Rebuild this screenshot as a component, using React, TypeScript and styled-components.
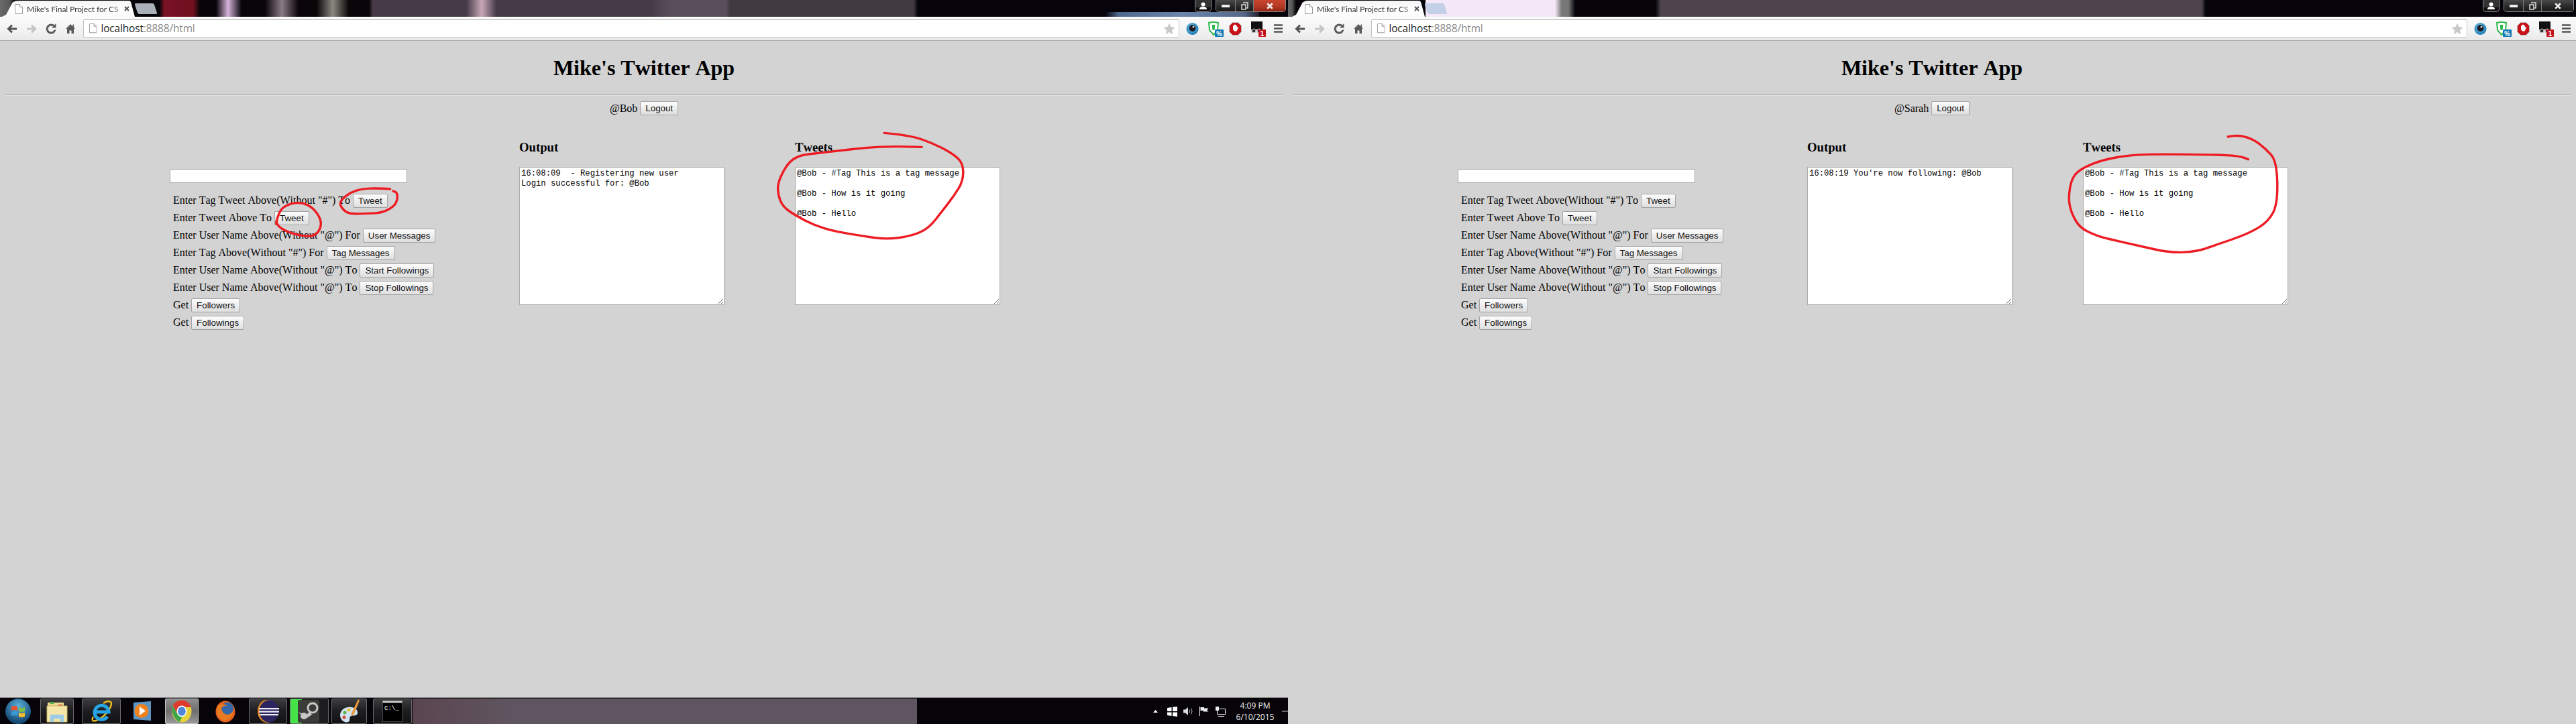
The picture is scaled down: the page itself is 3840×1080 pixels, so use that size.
import React from "react";
import styled, { createGlobalStyle } from "styled-components";

const Global = createGlobalStyle`
  html, body { margin: 0; padding: 0; background: #d3d3d3; }
  body { width: 3840px; height: 1080px; overflow: hidden; font-family: "Liberation Serif", "Times New Roman", serif; font-kerning: none; }
`;

const Desktop = styled.div`
  display: flex;
  width: 3840px;
  height: 1080px;
`;
const Win = styled.div`
  position: relative;
  flex: 0 0 1920px;
  height: 1080px;
  display: flex;
  flex-direction: column;
  background: #d3d3d3;
  overflow: hidden;
`;
const TabStrip = styled.div<{ $bg: string; $tabLeft: number }>`
  flex: 0 0 25px;
  display: flex;
  align-items: flex-start;
  padding-left: ${(p) => p.$tabLeft}px;
  background: ${(p) => p.$bg};
`;
const Tab = styled.div`
  flex: 0 0 197px;
  height: 24px;
  margin-top: 1px;
  display: flex;
  align-items: center;
  gap: 6px;
  padding: 0 8px 0 19px;
  box-sizing: border-box;
  background: linear-gradient(#f4f4f4, #ffffff 60%, #fafafa);
  clip-path: polygon(0 100%, 3% 88%, 8% 10%, 10% 2%, 12% 0, 96% 0, 97% 8%, 100% 100%);
`;
const TabTitle = styled.span`
  flex: 0 0 139px;
  white-space: nowrap;
  font: 12.2px Lato, "Open Sans", sans-serif;
  letter-spacing: -0.12px;
  color: #333;
  -webkit-mask-image: linear-gradient(to right, #000 90%, rgba(0, 0, 0, 0.45));
  mask-image: linear-gradient(to right, #000 90%, rgba(0, 0, 0, 0.45));
`;
const NewTab = styled.div<{ $c: string }>`
  flex: 0 0 29px;
  height: 16px;
  margin: 5px 0 0 2px;
  background: ${(p) => p.$c};
  border-radius: 2px;
  transform: skewX(18deg);
`;
const Controls = styled.div`
  margin-left: auto;
  display: flex;
  align-items: flex-start;
  gap: 6px;
  padding-right: 3px;
`;
const Profile = styled.div`
  width: 25px;
  height: 18px;
  box-sizing: border-box;
  border: 1px solid #8d8d8d;
  border-top: 0;
  border-radius: 0 0 5px 5px;
  background: linear-gradient(#333 0, #333 62%, #111 62%);
  display: flex;
  align-items: center;
  justify-content: center;
`;
const CtlGroup = styled.div`
  display: flex;
  height: 18px;
  box-sizing: border-box;
  border: 1px solid #8d8d8d;
  border-top: 0;
  border-radius: 0 0 5px 5px;
  overflow: hidden;
`;
const CtlBtn = styled.div<{ $w: number; $red?: boolean }>`
  width: ${(p) => p.$w}px;
  display: flex;
  align-items: center;
  justify-content: center;
  border-left: 1px solid #7d7d7d;
  &:first-child { border-left: 0; }
  background: ${(p) =>
    p.$red ? "linear-gradient(#c9452f, #b33a25 55%, #8f2412)" : "linear-gradient(#4a4a4a, #2a2a2a 55%, #1a1a1a)"};
`;
const Toolbar = styled.div`
  flex: 0 0 36px;
  box-sizing: border-box;
  display: flex;
  align-items: center;
  padding: 0 9px 0 10px;
  background: linear-gradient(#fbfbfb, #f2f2f2 60%, #e9e9e9);
  border-bottom: 1px solid #a8a8a8;
`;
const NavBtn = styled.span<{ $w: number; $ml: number }>`
  flex: 0 0 ${(p) => p.$w}px;
  margin-left: ${(p) => p.$ml}px;
  display: flex;
  justify-content: center;
`;
const Omnibox = styled.div`
  flex: 0 0 1634px;
  height: 27px;
  margin-left: 12px;
  box-sizing: border-box;
  display: flex;
  align-items: center;
  padding: 0 5px 0 8px;
  gap: 6px;
  background: #fff;
  border: 1px solid #c4c4c4;
  border-top-color: #b0b0b0;
  border-radius: 2px;
`;
const Url = styled.span`
  font: 15.4px "Open Sans", "Noto Sans", sans-serif;
  letter-spacing: -0.12px;
  color: #222;
  flex: 1;
  white-space: nowrap;
`;
const UrlRest = styled.span`
  color: #8a8a8a;
`;
const ExtSlot = styled.span<{ $ml: number }>`
  display: flex;
  margin-left: ${(p) => p.$ml}px;
`;

const Page = styled.main`
  flex: 1;
  min-height: 0;
  padding: 0 8px;
  color: #000;
`;
const Title = styled.h1`
  font-size: 32px;
  line-height: 37px;
  font-weight: bold;
  text-align: center;
  margin: 22px 0 21px;
`;
const Rule = styled.hr`
  margin: 0 0 8px;
  border: 0;
  border-top: 1px solid #a0a0a0;
  border-bottom: 1px solid #e4e4e4;
`;
const UserBar = styled.div`
  display: flex;
  justify-content: center;
  align-items: center;
  gap: 4px;
  height: 21px;
  font-size: 16px;
`;
const Columns = styled.div`
  display: flex;
  margin-top: 37px;
  padding-left: 245px;
`;
const FormCol = styled.div`
  flex: 0 0 521px;
  padding-top: 43px;
`;
const MsgCol = styled.section`
  flex: 0 0 411px;
`;
const Heading = styled.h3`
  margin: 0 0 18px;
  font-size: 18.72px;
  line-height: 22px;
  font-weight: bold;
`;
const TagInput = styled.input`
  display: block;
  width: 354px;
  height: 21px;
  box-sizing: border-box;
  margin: 0 0 13px;
  padding: 1px 2px;
  background: #fff;
  border: 1px solid #a9a9a9;
  border-radius: 0;
  outline: 0;
`;
const FormRow = styled.div`
  display: flex;
  align-items: center;
  gap: 4px;
  height: 26px;
  padding-left: 5px;
  font-size: 16px;
  white-space: nowrap;
`;
const Btn = styled.button`
  height: 21px;
  box-sizing: border-box;
  padding: 0 7px;
  font: 13.33px "Liberation Sans", Arial, sans-serif;
  color: #111;
  background: linear-gradient(#fdfdfd, #dedede);
  border: 1px solid #a4a4a4;
  border-radius: 2px;
`;
const Log = styled.textarea`
  display: block;
  width: 306px;
  height: 206px;
  box-sizing: border-box;
  margin: 0;
  padding: 2px;
  background: #fff;
  color: #000;
  border: 1px solid #a9a9a9;
  border-radius: 0;
  outline: 0;
  font: 12.22px/15px "Liberation Mono", "Courier New", monospace;
`;

const Taskbar = styled.footer`
  flex: 0 0 40px;
  box-sizing: border-box;
  display: flex;
  align-items: stretch;
  padding: 1px 0 0 0;
  border-top: 1px solid #8c8c8c;
  background: #060409;
  color: #fff;
`;
const Orb = styled.div`
  flex: 0 0 38px;
  height: 38px;
  margin-left: 8px;
  display: flex;
`;
const TaskBtn = styled.div<{ $w: number; $ml: number; $plain?: boolean; $on?: boolean }>`
  flex: 0 0 ${(p) => p.$w}px;
  margin-left: ${(p) => p.$ml}px;
  box-sizing: border-box;
  display: flex;
  align-items: center;
  justify-content: center;
  border-radius: 2px;
  ${(p) =>
    p.$plain
      ? ""
      : `border: 1px solid ${p.$on ? "#c8c8c8" : "#6b6b6b"};
         background: ${
           p.$on
             ? "linear-gradient(#8e8e8e, #6e6e6e 50%, #9a9a9a)"
             : "linear-gradient(#3d3d3f, #1d1d20 50%, #131316)"
         };`}
`;
const SteamBtn = styled(TaskBtn)`
  background: linear-gradient(to right, #47e24a 0, #47e24a 17px, #1d1d20 17px);
  justify-content: flex-end;
  padding-right: 13px;
`;
const Running = styled.div`
  flex: 0 0 752px;
  margin-left: 1px;
  background: linear-gradient(to right, #5a454f, #5f5560 20%, #5f5560);
`;
const Tray = styled.div`
  flex: 1;
  display: flex;
  align-items: center;
  padding-left: 352px;
`;
const TraySlot = styled.span<{ $ml: number }>`
  display: flex;
  margin-left: ${(p) => p.$ml}px;
`;
const Clock = styled.div`
  flex: 0 0 60px;
  margin-left: 14px;
  text-align: center;
  font: 12px/17px "Open Sans", "Noto Sans", sans-serif;
  color: #f0f0f0;
  white-space: nowrap;
`;
const ShowDesktop = styled.div`
  flex: 0 0 13px;
  margin-left: 10px;
  box-sizing: border-box;
  border: 1px solid #6a6a6a;
  background: linear-gradient(135deg, #4a4a4a, #111 45%);
`;

const Scribble = styled.svg<{ $l: number; $t: number }>`
  position: absolute;
  left: ${(p) => p.$l}px;
  top: ${(p) => p.$t}px;
  overflow: visible;
  pointer-events: none;
  z-index: 5;
`;

type Pt = [number, number];
const smooth = (pts: Pt[]) => {
  let d = `M${pts[0][0]} ${pts[0][1]}`;
  for (let i = 1; i < pts.length - 1; i++) {
    const mx = (pts[i][0] + pts[i + 1][0]) / 2;
    const my = (pts[i][1] + pts[i + 1][1]) / 2;
    d += ` Q${pts[i][0]} ${pts[i][1]} ${mx} ${my}`;
  }
  const e = pts[pts.length - 1];
  return d + ` L${e[0]} ${e[1]}`;
};

const Ink = ({ l, t, w, h, vw, vh, pts }: { l: number; t: number; w: number; h: number; vw: number; vh: number; pts: Pt[] }) => (
  <Scribble $l={l} $t={t} width={w} height={h} viewBox={`0 0 ${vw} ${vh}`} preserveAspectRatio="none">
    <path
      d={smooth(pts)}
      fill="none"
      stroke="#ed1c24"
      strokeWidth={3.4}
      strokeLinecap="round"
      strokeLinejoin="round"
      vectorEffect="non-scaling-stroke"
    />
  </Scribble>
);

const DocIcon = ({ s = 1 }: { s?: number }) => (
  <svg width={12 * s} height={15 * s} viewBox="0 0 12 15" style={{ flex: "none" }}>
    <path d="M.5.5h7l4 4v10H.5z" fill="#fff" stroke="#9a9a9a" />
    <path d="M7.5.5v4h4" fill="#eee" stroke="#9a9a9a" />
  </svg>
);
const CloseX = ({ c = "#555", s = 8 }: { c?: string; s?: number }) => (
  <svg width={s} height={s} viewBox="0 0 8 8" style={{ flex: "none" }}>
    <path d="M1 1l6 6M7 1L1 7" stroke={c} strokeWidth={2} />
  </svg>
);
const Back = ({ c }: { c: string }) => (
  <svg width="16" height="14" viewBox="0 0 16 14">
    <path d="M15 7H4M8 1.5 2.5 7 8 12.5" fill="none" stroke={c} strokeWidth={3} />
  </svg>
);
const Forward = ({ c }: { c: string }) => (
  <svg width="16" height="14" viewBox="0 0 16 14">
    <path d="M1 7h11M8 1.5 13.500 7 8 12.500" fill="none" stroke={c} strokeWidth={3} />
  </svg>
);
const Reload = () => (
  <svg width="16" height="16" viewBox="0 0 16 16">
    <path d="M13 4.500A6 6 0 1 0 14 9.500" fill="none" stroke="#5a5a5a" strokeWidth={3} />
    <path d="M9 6.500h6.500V0z" fill="#5a5a5a" />
  </svg>
);
const Home = () => (
  <svg width="14" height="15" viewBox="0 0 14 15">
    <path d="M7 1 0 8h2v7h3.500v-4.500h3V15H12V8h2l-2-2V1.500h-1.500v3z" fill="#5a5a5a" />
  </svg>
);
const Star = () => (
  <svg width="18" height="18" viewBox="0 0 18 18">
    <path d="M9 .5l2.600 5.700 6 .7-4.500 4.100 1.300 6.200L9 14.100l-5.400 3.100 1.300-6.200L.4 6.900l6-.7z" fill="#c8c8c8" />
  </svg>
);
const EyeExt = () => (
  <svg width="19" height="20" viewBox="0 0 19 20">
    <defs>
      <radialGradient id="eye" cx="45%" cy="40%" r="60%">
        <stop offset="0" stopColor="#7fd0ee" />
        <stop offset="1" stopColor="#1a78b0" />
      </radialGradient>
    </defs>
    <circle cx="9.500" cy="10" r="9" fill="url(#eye)" />
    <circle cx="9.500" cy="9" r="5" fill="#1c1c26" />
    <circle cx="11" cy="7" r="1.500" fill="#ddd" />
  </svg>
);
const ShieldExt = () => (
  <svg width="23" height="24" viewBox="0 0 23 24">
    <path d="M1 3 Q8 1 15 3 L14 14 L8 21 L2 14z" fill="#fff" stroke="#2fb84a" strokeWidth={2} />
    <path d="M5.500 6h5l-1 8h-3z" fill="#2fb84a" />
    <rect x="10" y="13" width="13" height="11" rx="1" fill="#0e77b5" />
    <text x="16.500" y="22.500" fontSize="10" fontWeight="bold" textAnchor="middle" fill="#fff" fontFamily="Liberation Sans, sans-serif">%</text>
  </svg>
);
const StopExt = () => (
  <svg width="19" height="20" viewBox="0 0 19 20">
    <path d="M5.500 .5h8l5 5v9l-5 5h-8l-5-5v-9z" fill="#c8131a" stroke="#bbb" />
    <path d="M6 9V5.500h1.500V4h1V3.500h1V4h1v1.500H12V8l1-1 1 1-2.500 5.500H8L6 11z" fill="#fff" />
  </svg>
);
const GhostExt = () => (
  <svg width="24" height="24" viewBox="0 0 24 24">
    <rect x="1" y="1" width="17" height="17" fill="#111" />
    <rect x="1" y="13" width="17" height="5" fill="#ddd" />
    <circle cx="5" cy="15" r="3" fill="#333" stroke="#ddd" />
    <circle cx="13" cy="15" r="3" fill="#333" stroke="#ddd" />
    <rect x="12" y="13" width="11" height="11" rx="1" fill="#c4121c" />
    <text x="17.500" y="22.500" fontSize="10.500" fontWeight="bold" textAnchor="middle" fill="#fff" fontFamily="Liberation Sans, sans-serif">1</text>
  </svg>
);
const Menu = () => (
  <svg width="13" height="13" viewBox="0 0 13 13">
    <path d="M0 1.500h13M0 6.500h13M0 11.500h13" stroke="#555" strokeWidth={2.400} />
  </svg>
);
const Person = () => (
  <svg width="11" height="12" viewBox="0 0 11 12">
    <circle cx="5.500" cy="3.500" r="3" fill="#fff" />
    <path d="M0 11c0-3 2-4 5.500-4S11 8 11 11z" fill="#fff" />
  </svg>
);

const OrbIcon = () => (
  <svg width="38" height="38" viewBox="0 0 38 38">
    <defs>
      <radialGradient id="orb" cx="50%" cy="30%" r="70%">
        <stop offset="0" stopColor="#5fb2dc" />
        <stop offset="1" stopColor="#0f3f6b" />
      </radialGradient>
    </defs>
    <circle cx="19" cy="19" r="18.500" fill="url(#orb)" stroke="#1c5f86" />
    <path d="M9 12q4-2 9 0v6q-5-2-9 0z" fill="#e8522f" />
    <path d="M20 13q4 2 9 0v6q-5 2-9 0z" fill="#7cc04a" />
    <path d="M9 20q4-2 9 0v6q-5-2-9 0z" fill="#3a9ad9" />
    <path d="M20 21q4 2 9 0v6q-5 2-9 0z" fill="#f2bc30" />
  </svg>
);
const FolderIcon = () => (
  <svg width="34" height="34" viewBox="0 0 34 34">
    <path d="M3 4h24v6H3z" fill="#e8d98c" />
    <path d="M7 3h5v3H7z" fill="#4cae4c" />
    <path d="M19 7h6v3h-6z" fill="#d9534f" />
    <path d="M2 9h30v24H2z" fill="#f3e6a8" stroke="#c9b56a" />
    <path d="M7 22h20v11h-5v-5H12v5H7z" fill="#9ccbe8" />
  </svg>
);
const IeIcon = () => (
  <svg width="32" height="36" viewBox="0 0 32 36">
    <path d="M4 26C0 34 6 34 14 29 22 24 30 15 31 7 31 2 26 2 19 6" fill="none" stroke="#e8b820" strokeWidth={2.500} />
    <path d="M7 19h20A10.500 10.500 0 1 0 25 26" fill="none" stroke="#25a5e8" strokeWidth={5} />
  </svg>
);
const WmpIcon = () => (
  <svg width="28" height="32" viewBox="0 0 28 32">
    <path d="M1 3 L27 1 V30 L1 28z" fill="#5d94c4" />
    <circle cx="13" cy="15.500" r="10.500" fill="#f0821e" />
    <path d="M10 9l9 6.500-9 6.500z" fill="#fff" />
  </svg>
);
const ChromeIcon = () => (
  <svg width="30" height="34" viewBox="0 0 30 34">
    <ellipse cx="15" cy="17" rx="14.500" ry="16.500" fill="#e8d23a" />
    <path d="M15 .5C9 .5 4 4 1.800 9L8 20l7-9h14C26.500 4.500 21 .5 15 .5z" fill="#dc3a2e" />
    <path d="M1.800 9C-.5 16 1 27 11.500 33l6-11L8 20z" fill="#3da64a" />
    <ellipse cx="15" cy="17" rx="7.500" ry="8.500" fill="#fff" />
    <ellipse cx="15" cy="17" rx="5.800" ry="6.800" fill="#4e86d8" />
  </svg>
);
const FoxIcon = () => (
  <svg width="30" height="34" viewBox="0 0 30 34">
    <ellipse cx="15" cy="17.500" rx="14.500" ry="16" fill="#e2611d" />
    <ellipse cx="18" cy="13" rx="9" ry="9.500" fill="#3566a8" />
    <path d="M4 8q8-4 14 1-7-1-9 4 1 7 8 9 6 0 10-6-1 12-12 15Q3 29 2 17q0-5 2-9z" fill="#ea7a1f" />
  </svg>
);
const EclipseIcon = () => (
  <svg width="32" height="34" viewBox="0 0 32 34">
    <ellipse cx="14" cy="17" rx="14" ry="17" fill="#e8891f" />
    <ellipse cx="17" cy="17" rx="14.500" ry="16.500" fill="#2b2560" />
    <path d="M2 12h30v2.200H2zM2 16.500h30v2.200H2zM3 21h28v2.200H3z" fill="#f0eef8" />
  </svg>
);
const SteamIcon = () => (
  <svg width="32" height="34" viewBox="0 0 32 34">
    <rect width="32" height="34" rx="3" fill="#3b3b38" />
    <circle cx="22" cy="12" r="7" fill="none" stroke="#c8c8c4" strokeWidth={3} />
    <circle cx="9" cy="24" r="5" fill="#c8c8c4" />
    <path d="M0 18l12 5 6-6 3 5-9 6z" fill="#c8c8c4" />
  </svg>
);
const PaintIcon = () => (
  <svg width="32" height="36" viewBox="0 0 32 36">
    <path d="M2 24c0-9 9-13 17-12 8 1 11 7 8 11-3 3-8 0-10 3-2 4 1 6-3 8-5 2-12-3-12-10z" fill="#cfe3f0" />
    <circle cx="9" cy="20" r="2.500" fill="#5fb04a" />
    <circle cx="15" cy="16" r="2.500" fill="#e8c32e" />
    <circle cx="8" cy="27" r="2.500" fill="#d9453a" />
    <path d="M29 0l2 2-9 22-4-1z" fill="#e89a3c" />
  </svg>
);
const CmdIcon = () => (
  <svg width="30" height="32" viewBox="0 0 30 32">
    <rect width="30" height="32" fill="#000" stroke="#8c8c8c" />
    <rect x="0.500" y="0.500" width="29" height="3" fill="#c8c8c8" />
    <text x="3" y="14" fontSize="9" fill="#fff" fontFamily="Liberation Mono, monospace">C:\_</text>
  </svg>
);

const TrayWin = () => (
  <svg width="15" height="15" viewBox="0 0 15 15">
    <path d="M0 2l6.500-1v6H0zM8 .8 15 0v7H8zM0 8.500h6.500v5.500L0 13zM8 8.500h7V15l-7-1z" fill="#fff" />
  </svg>
);
const TrayVol = () => (
  <svg width="15" height="14" viewBox="0 0 15 14">
    <path d="M0 4.500h3L7 1v12L3 9.500H0z" fill="#ddd" />
    <path d="M9 4.500q1.500 2.500 0 5M11.500 2.500q3 4.500 0 9" fill="none" stroke="#bbb" />
  </svg>
);
const TrayFlag = () => (
  <svg width="14" height="14" viewBox="0 0 14 14">
    <path d="M.5 0v14" stroke="#fff" />
    <path d="M1.500 1H7v1.500h6.500L11 5.500l2.500 2H6V6H1.500z" fill="#eee" />
  </svg>
);
const TrayNet = () => (
  <svg width="15" height="15" viewBox="0 0 15 15">
    <path d="M2.500 3.500h12v8h-12z" fill="none" stroke="#eee" />
    <path d="M4 14.500h9" stroke="#eee" />
    <rect x="0" y="0" width="5" height="6" fill="#eee" />
  </svg>
);
const Caret = () => (
  <svg width="7" height="4" viewBox="0 0 7 4">
    <path d="M0 4l3.500-4L7 4z" fill="#fff" />
  </svg>
);

const Chrome = ({ strip, tabLeft, newTab, red }: { strip: string; tabLeft: number; newTab: string; red?: boolean }) => (
  <>
    <TabStrip $bg={strip} $tabLeft={tabLeft}>
      <Tab>
        <DocIcon />
        <TabTitle>Mike's Final Project for CS</TabTitle>
        <CloseX />
      </Tab>
      <NewTab $c={newTab} />
      <Controls>
        <Profile>
          <Person />
        </Profile>
        <CtlGroup>
          <CtlBtn $w={28}>
            <svg width="12" height="4" viewBox="0 0 12 4"><rect width="12" height="4" fill="#eee" /></svg>
          </CtlBtn>
          <CtlBtn $w={26}>
            <svg width="11" height="12" viewBox="0 0 11 12"><path d="M3 1h7v8H8M1 4h6v7H1z" fill="none" stroke="#ddd" strokeWidth={1.500} /></svg>
          </CtlBtn>
          <CtlBtn $w={47} $red={red}>
            <CloseX c="#f4f4f4" s={10} />
          </CtlBtn>
        </CtlGroup>
      </Controls>
    </TabStrip>
    <Toolbar>
      <NavBtn $w={16} $ml={0}><Back c="#555" /></NavBtn>
      <NavBtn $w={16} $ml={13}><Forward c="#c4c4c4" /></NavBtn>
      <NavBtn $w={16} $ml={13}><Reload /></NavBtn>
      <NavBtn $w={14} $ml={14}><Home /></NavBtn>
      <Omnibox>
        <DocIcon s={0.95} />
        <Url>
          localhost<UrlRest>:8888/html</UrlRest>
        </Url>
        <Star />
      </Omnibox>
      <ExtSlot $ml={10}><EyeExt /></ExtSlot>
      <ExtSlot $ml={14}><ShieldExt /></ExtSlot>
      <ExtSlot $ml={8}><StopExt /></ExtSlot>
      <ExtSlot $ml={13}><GhostExt /></ExtSlot>
      <ExtSlot $ml={11}><Menu /></ExtSlot>
    </Toolbar>
  </>
);

const AppPage = ({ user, output, tweets }: { user: string; output: string; tweets: string }) => (
  <Page>
    <Title>Mike's Twitter App</Title>
    <Rule />
    <UserBar>
      {user} <Btn>Logout</Btn>
    </UserBar>
    <Columns>
      <FormCol>
        <TagInput type="text" />
        <FormRow>Enter Tag Tweet Above(Without "#") To <Btn>Tweet</Btn></FormRow>
        <FormRow>Enter Tweet Above To <Btn>Tweet</Btn></FormRow>
        <FormRow>Enter User Name Above(Without "@") For <Btn>User Messages</Btn></FormRow>
        <FormRow>Enter Tag Above(Without "#") For <Btn>Tag Messages</Btn></FormRow>
        <FormRow>Enter User Name Above(Without "@") To <Btn>Start Followings</Btn></FormRow>
        <FormRow>Enter User Name Above(Without "@") To <Btn>Stop Followings</Btn></FormRow>
        <FormRow>Get <Btn>Followers</Btn></FormRow>
        <FormRow>Get <Btn>Followings</Btn></FormRow>
      </FormCol>
      <MsgCol>
        <Heading>Output</Heading>
        <Log readOnly value={output} />
      </MsgCol>
      <MsgCol>
        <Heading>Tweets</Heading>
        <Log readOnly value={tweets} />
      </MsgCol>
    </Columns>
  </Page>
);

const TWEETS = "@Bob - #Tag This is a tag message\n\n@Bob - How is it going\n\n@Bob - Hello";

const LEFT_STRIP = `linear-gradient(to right, #0a0a14, #4f678c 8%, #6a86ac 50%, #55688a 90%, #20202a) 1649px 18px / 228px 7px no-repeat,
  linear-gradient(to right, #6a6a6a 0, #5a5a5a 14px, #08050a 22px, #08050a 238px, #7a1226 245px, #70101f 288px, #08050a 298px,
  #08050a 322px, #d8b4dc 340px, #08050a 360px, #0a0508 395px, #8a7a88 420px, #0a0508 445px, #0a0508 472px, #8a8a80 496px,
  #0a0508 520px, #0a0508 550px, #463a48 556px, #463a48 695px, #c8a8b8 718px, #463a48 740px, #463a48 970px, #5a4e5c 1000px,
  #5a4e5c 1082px, #413a40 1088px, #413a40 1362px, #06040a 1368px, #06040a 100%)`;
const RIGHT_STRIP = `linear-gradient(to right, #6a6a6a 0, #5a5a5a 6px, #08050a 12px, #08050a 204px, #f4e8f8 206px, #f4e8f8 398px,
  #777 408px, #777 418px, #08050a 428px, #08050a 548px, #4e444e 556px, #4e444e 1362px, #06040a 1368px, #06040a 100%)`;

export default function App() {
  return (
    <>
      <Global />
      <Desktop>
        <Win>
          <Chrome strip={LEFT_STRIP} tabLeft={3} newTab="#a9b0b8" red />
          <AppPage user="@Bob" output={"16:08:09  - Registering new user\nLogin successful for: @Bob"} tweets={TWEETS} />
          <Taskbar>
            <Orb><OrbIcon /></Orb>
            <TaskBtn $w={50} $ml={14}><FolderIcon /></TaskBtn>
            <TaskBtn $w={58} $ml={12}><IeIcon /></TaskBtn>
            <TaskBtn $w={48} $ml={8} $plain><WmpIcon /></TaskBtn>
            <TaskBtn $w={50} $ml={10} $on><ChromeIcon /></TaskBtn>
            <TaskBtn $w={60} $ml={10} $plain><FoxIcon /></TaskBtn>
            <TaskBtn $w={57} $ml={5}><EclipseIcon /></TaskBtn>
            <SteamBtn $w={58} $ml={4}><SteamIcon /></SteamBtn>
            <TaskBtn $w={53} $ml={4}><PaintIcon /></TaskBtn>
            <TaskBtn $w={58} $ml={9} $on={false}><CmdIcon /></TaskBtn>
            <Running />
            <Tray>
              <TraySlot $ml={0}><Caret /></TraySlot>
              <TraySlot $ml={14}><TrayWin /></TraySlot>
              <TraySlot $ml={9}><TrayVol /></TraySlot>
              <TraySlot $ml={9}><TrayFlag /></TraySlot>
              <TraySlot $ml={10}><TrayNet /></TraySlot>
              <Clock>4:09 PM<br />6/10/2015</Clock>
              <ShowDesktop />
            </Tray>
          </Taskbar>
          <Ink l={230} t={230} w={450} h={270} vw={1350} vh={810}
            pts={[[1055,156],[1000,152],[930,155],[880,170],[840,200],[828,225],[850,255],[880,268],[960,265],[1020,262],[1070,235],[1088,205],[1086,172],[1068,165]]} />
          <Ink l={230} t={230} w={450} h={270} vw={1350} vh={810}
            pts={[[545,312],[555,255],[600,222],[660,215],[710,240],[745,290],[745,330],[720,365],[670,368],[600,350],[555,325],[545,300]]} />
          <Ink l={750} t={190} w={760} h={280} vw={1568} vh={840}
            pts={[[1172,25],[1250,35],[1320,70],[1380,115],[1415,160],[1415,240],[1385,310],[1350,375],[1310,450],[1260,485],[1180,502],[1100,485],[1020,465],[960,440],[900,395],[860,355],[845,300],[845,245],[875,160],[910,125],[970,115],[1030,105],[1120,90],[1200,85],[1288,88]]} />
        </Win>
        <Win>
          <Chrome strip={RIGHT_STRIP} tabLeft={6} newTab="#c4d0e8" />
          <AppPage user="@Sarah" output={"16:08:19 You're now following: @Bob"} tweets={TWEETS} />
          <Ink l={730} t={190} w={760} h={200} vw={1568} vh={600}
            pts={[[1385,42],[1410,33],[1460,50],[1500,95],[1535,150],[1538,340],[1510,420],[1450,475],[1340,530],[1290,555],[1210,562],[1110,530],[1020,500],[980,485],[930,450],[905,390],[893,320],[905,220],[940,180],[1000,145],[1090,122],[1190,120],[1340,122],[1420,128],[1447,143]]} />
        </Win>
      </Desktop>
    </>
  );
}
